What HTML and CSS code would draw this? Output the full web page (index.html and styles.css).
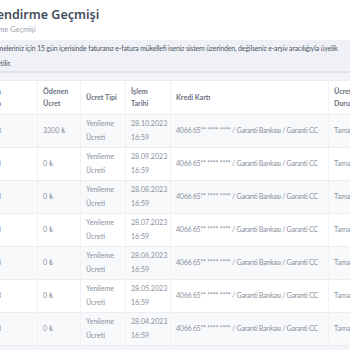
FILE: index.html
```html
<!DOCTYPE html>
<html lang="tr">
<head>
    <meta charset="UTF-8">
    <meta name="viewport" content="width=device-width, initial-scale=1.0">
    <title>Ücretlendirme Geçmişi</title>
    <link rel="stylesheet" href="styles.css">
</head>
<body>
    <div class="page">
        <div class="page-head">
            <h1 class="page-title">Ücretlendirme Geçmişi</h1>
            <div class="breadcrumb">Ücretlendirme Geçmişi</div>
        </div>

        <div class="notice">
            Ödemeleriniz için 15 gün içerisinde faturanız e-fatura mükellefi iseniz sistem üzerinden, değilseniz e-arşiv aracılığıyla üyelik<br>
            iletilir.
        </div>

        <div class="table-card">
            <table class="history-table">
                <colgroup>
                    <col class="col-date">
                    <col class="col-paid">
                    <col class="col-type">
                    <col class="col-time">
                    <col class="col-card">
                    <col class="col-status">
                </colgroup>
                <thead>
                    <tr>
                        <th>Bitiş<br>Tarih</th>
                        <th>Ödenen<br>Ücret</th>
                        <th>Ücret Tipi</th>
                        <th>İşlem<br>Tarihi</th>
                        <th>Kredi Kartı</th>
                        <th>Ücret<br>Durumu</th>
                    </tr>
                </thead>
                <tbody>
                    <tr>
                        <td>28.11.2023</td>
                        <td>3300 ₺</td>
                        <td>Yenileme<br>Ücreti</td>
                        <td>28.10.2023<br>16:59</td>
                        <td class="card">4066 65** **** **** / Garanti Bankası / Garanti CC</td>
                        <td>Tamamlandı</td>
                    </tr>
                    <tr>
                        <td>28.10.2023</td>
                        <td>0 ₺</td>
                        <td>Yenileme<br>Ücreti</td>
                        <td>28.09.2023<br>16:59</td>
                        <td class="card">4066 65** **** **** / Garanti Bankası / Garanti CC</td>
                        <td>Tamamlandı</td>
                    </tr>
                    <tr>
                        <td>28.09.2023</td>
                        <td>0 ₺</td>
                        <td>Yenileme<br>Ücreti</td>
                        <td>28.08.2023<br>16:59</td>
                        <td class="card">4066 65** **** **** / Garanti Bankası / Garanti CC</td>
                        <td>Tamamlandı</td>
                    </tr>
                    <tr>
                        <td>28.08.2023</td>
                        <td>0 ₺</td>
                        <td>Yenileme<br>Ücreti</td>
                        <td>28.07.2023<br>16:59</td>
                        <td class="card">4066 65** **** **** / Garanti Bankası / Garanti CC</td>
                        <td>Tamamlandı</td>
                    </tr>
                    <tr>
                        <td>28.07.2023</td>
                        <td>0 ₺</td>
                        <td>Yenileme<br>Ücreti</td>
                        <td>28.06.2023<br>16:59</td>
                        <td class="card">4066 65** **** **** / Garanti Bankası / Garanti CC</td>
                        <td>Tamamlandı</td>
                    </tr>
                    <tr>
                        <td>28.06.2023</td>
                        <td>0 ₺</td>
                        <td>Yenileme<br>Ücreti</td>
                        <td>28.05.2023<br>16:59</td>
                        <td class="card">4066 65** **** **** / Garanti Bankası / Garanti CC</td>
                        <td>Tamamlandı</td>
                    </tr>
                    <tr>
                        <td>28.05.2023</td>
                        <td>0 ₺</td>
                        <td>Yenileme<br>Ücreti</td>
                        <td>28.04.2023<br>16:59</td>
                        <td class="card">4066 65** **** **** / Garanti Bankası / Garanti CC</td>
                        <td>Tamamlandı</td>
                    </tr>
                </tbody>
            </table>
        </div>
    </div>
</body>
</html>
```

FILE: styles.css
```css
:root {
    --text: #444d5c;
    --muted: #8a92a0;
    --border: #e8ebf0;
    --stripe: #f8f9fb;
}

html, body {
    margin: 0;
    overflow: hidden;
}

body {
    font-family: Lato, 'Noto Sans', sans-serif;
    color: var(--text);
    background-color: #f3f4f7;
}

/* la page est plus large que la fenêtre, on n'en voit que la partie droite */
.page {
    width: 520px;
    margin-left: -44px;
}

.page-head {
    background: white;
    padding: 6px 0 4px 4px;
}

.page-title {
    font-family: 'Noto Sans', sans-serif;
    font-size: 12.5px;
    font-weight: 600;
    margin: 0;
    line-height: 18px;
    color: #444d5c;
}

.breadcrumb {
    font-size: 7.4px;
    color: #9aa1ad;
    line-height: 12px;
    padding-left: 2px;
}

.notice {
    background-color: #eff1f6;
    border-bottom: 2px solid #dfe2e8;
    font-size: 6.9px;
    letter-spacing: -0.12px;
    line-height: 15px;
    color: #4d5566;
    padding: 1px 0 0 38px;
    text-indent: -9px;
    margin-bottom: 7px;
}

.table-card {
    background: white;
    border-top: 1px solid var(--border);
}

.history-table {
    width: 100%;
    border-collapse: collapse;
    table-layout: fixed;
    font-size: 7.1px;
}

.col-date { width: 81px; }
.col-paid { width: 43px; }
.col-type { width: 45px; }
.col-time { width: 45px; }
.col-card { width: 158px; }

.history-table th {
    text-align: left;
    font-weight: 700;
    color: #69717f;
    line-height: 12px;
    padding: 5px 5px 4px;
    border-left: 1px solid #f1f2f5;
    border-bottom: 1px solid var(--border);
}

.history-table td {
    color: var(--muted);
    line-height: 14px;
    padding: 2px 5px;
    border-left: 1px solid #f1f2f5;
    border-bottom: 1px solid #eceef2;
    white-space: nowrap;
}

.history-table td.card {
    letter-spacing: -0.3px;
}

.history-table th:first-child,
.history-table td:first-child {
    text-align: right;
    padding-right: 36px;
}

.history-table td:first-child {
    height: 27.5px;
}

.history-table tbody tr:nth-child(odd) {
    background-color: var(--stripe);
}
```
